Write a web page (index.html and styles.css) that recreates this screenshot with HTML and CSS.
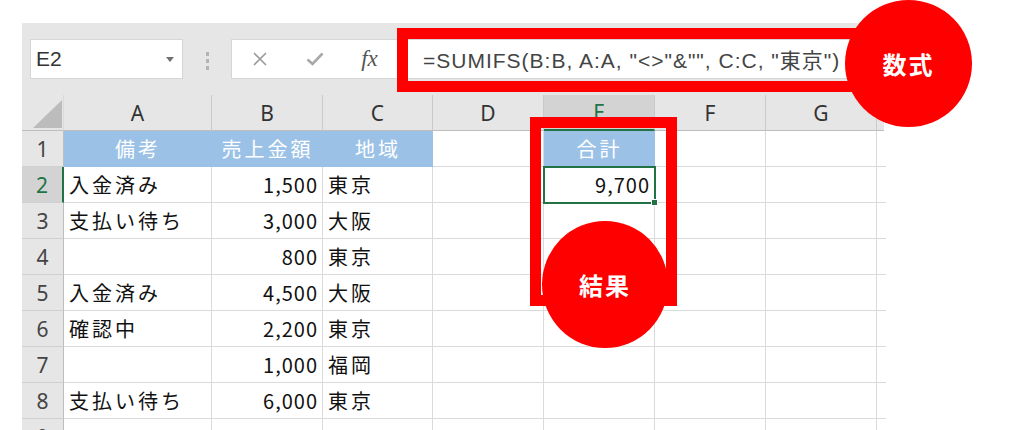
FILE: index.html
```html
<!DOCTYPE html>
<html lang="ja">
<head>
    <meta charset="UTF-8">
    <link rel="stylesheet" href="styles.css">
</head>
<body>
    <div class="sheet">
        <!-- Barre de formule -->
        <div class="toolbar">
            <div class="namebox"><span>E2</span><span class="caret"></span></div>
            <div class="grip"><i></i><i></i><i></i></div>
            <div class="fbar">
                <span class="fb-slot">
                    <svg width="16" height="16" viewBox="0 0 16 16">
                        <path d="M2,2 L14,14 M14,2 L2,14" stroke="#9a9a9a" stroke-width="1.6" fill="none"/>
                    </svg>
                </span>
                <span class="fb-slot">
                    <svg width="18" height="14" viewBox="0 0 18 14">
                        <path d="M1.5,7.5 L6.5,12 L16.5,1.5" stroke="#a8a8a8" stroke-width="2.6" fill="none"/>
                    </svg>
                </span>
                <span class="fb-slot fx">fx</span>
                <span class="formula">=SUMIFS(B:B, A:A, "&lt;&gt;"&amp;"", C:C, "東京")</span>
            </div>
        </div>

        <!-- Feuille -->
        <div class="grid">
            <div class="corner">
                <svg width="42" height="36">
                    <polygon points="11,33 40,33 40,5" fill="#bcbcbc"/>
                </svg>
            </div>
            <div class="ch">A</div>
            <div class="ch">B</div>
            <div class="ch">C</div>
            <div class="ch">D</div>
            <div class="ch active">E</div>
            <div class="ch">F</div>
            <div class="ch">G</div>
            <div class="ch edge"></div>

            <div class="rh">1</div>
            <div class="c hd">備考</div>
            <div class="c hd">売上金額</div>
            <div class="c hd">地域</div>
            <div class="c"></div>
            <div class="c hd">合計</div>
            <div class="c"></div>
            <div class="c"></div>
            <div class="c edge"></div>

            <div class="rh active">2</div>
            <div class="c">入金済み</div>
            <div class="c num">1,500</div>
            <div class="c">東京</div>
            <div class="c"></div>
            <div class="c num sel">9,700</div>
            <div class="c"></div>
            <div class="c"></div>
            <div class="c edge"></div>

            <div class="rh">3</div>
            <div class="c">支払い待ち</div>
            <div class="c num">3,000</div>
            <div class="c">大阪</div>
            <div class="c"></div>
            <div class="c"></div>
            <div class="c"></div>
            <div class="c"></div>
            <div class="c edge"></div>

            <div class="rh">4</div>
            <div class="c"></div>
            <div class="c num">800</div>
            <div class="c">東京</div>
            <div class="c"></div>
            <div class="c"></div>
            <div class="c"></div>
            <div class="c"></div>
            <div class="c edge"></div>

            <div class="rh">5</div>
            <div class="c">入金済み</div>
            <div class="c num">4,500</div>
            <div class="c">大阪</div>
            <div class="c"></div>
            <div class="c"></div>
            <div class="c"></div>
            <div class="c"></div>
            <div class="c edge"></div>

            <div class="rh">6</div>
            <div class="c">確認中</div>
            <div class="c num">2,200</div>
            <div class="c">東京</div>
            <div class="c"></div>
            <div class="c"></div>
            <div class="c"></div>
            <div class="c"></div>
            <div class="c edge"></div>

            <div class="rh">7</div>
            <div class="c"></div>
            <div class="c num">1,000</div>
            <div class="c">福岡</div>
            <div class="c"></div>
            <div class="c"></div>
            <div class="c"></div>
            <div class="c"></div>
            <div class="c edge"></div>

            <div class="rh">8</div>
            <div class="c">支払い待ち</div>
            <div class="c num">6,000</div>
            <div class="c">東京</div>
            <div class="c"></div>
            <div class="c"></div>
            <div class="c"></div>
            <div class="c"></div>
            <div class="c edge"></div>

            <div class="rh">9</div>
            <div class="c"></div>
            <div class="c"></div>
            <div class="c"></div>
            <div class="c"></div>
            <div class="c"></div>
            <div class="c"></div>
            <div class="c"></div>
            <div class="c edge"></div>
        </div>
    </div>

    <!-- Annotations -->
    <div class="mark mark-formula"></div>
    <div class="bubble bubble-formula">数式</div>
    <div class="mark mark-result"></div>
    <div class="bubble bubble-result">結果</div>
</body>
</html>
```

FILE: styles.css
```css
:root {
    --red: #ff0000;
    --green: #217346;
    --chrome: #e6e6e6;
    --chrome-on: #d3d3d3;
    --gridline: #dadada;
    --head-fill: #9bc2e6;
}

body {
    margin: 0;
    background: white;
    overflow: hidden;
    font-family: 'Noto Sans CJK JP', sans-serif;
}

.sheet {
    margin: 23px 0 0 22px;
    width: 862px;
}

.toolbar {
    height: 72px;
    box-sizing: border-box;
    padding: 16px 7px 0 8px;
    background: var(--chrome);
    display: flex;
    align-items: flex-start;
}

.namebox {
    width: 153px;
    height: 40px;
    box-sizing: border-box;
    padding: 0 8px 0 5px;
    background: white;
    border: 1px solid #d6d6d6;
    display: flex;
    align-items: center;
    justify-content: space-between;
    font-family: 'Liberation Sans', sans-serif;
    font-size: 21px;
    color: #333;
}

.caret {
    border-left: 4px solid transparent;
    border-right: 4px solid transparent;
    border-top: 5px solid #707070;
}

.grip {
    width: 3px;
    margin: 13px 22px 0 23px;
    display: flex;
    flex-direction: column;
    gap: 3px;
}

.grip i {
    width: 3px;
    height: 4px;
    background: #b4b4b4;
}

.fbar {
    flex: 1;
    height: 40px;
    box-sizing: border-box;
    background: white;
    border: 1px solid #d6d6d6;
    display: flex;
    align-items: center;
}

.fb-slot {
    width: 55px;
    display: flex;
    justify-content: center;
}

.fx {
    font-family: 'Liberation Serif', serif;
    font-style: italic;
    font-size: 23px;
    color: #555;
}

.formula {
    margin-left: 26px;
    font-family: 'Liberation Sans', 'Noto Sans CJK JP', sans-serif;
    font-size: 21px;
    letter-spacing: 1px;
    color: #444;
    white-space: nowrap;
}

.grid {
    display: grid;
    grid-template-columns: 42px 148px 111px 110px 111px 111px 111px 111px 7px;
    grid-auto-rows: 36px;
}

.grid > div {
    box-sizing: border-box;
    border-right: 1px solid var(--gridline);
    border-bottom: 1px solid var(--gridline);
    display: flex;
    align-items: center;
}

.grid > .edge {
    border-right: none;
}

.corner {
    background: var(--chrome);
}

.grid > .corner,
.grid > .ch {
    border-bottom-color: #bdbdbd;
}

.grid > .ch {
    background: var(--chrome);
    border-right-color: #cacaca;
    justify-content: center;
    font-family: 'Noto Sans', sans-serif;
    font-size: 21px;
    color: #333;
}

.grid > .ch.active {
    background: var(--chrome-on);
    color: var(--green);
    border-bottom: 2px solid var(--green);
}

.grid > .rh {
    background: var(--chrome);
    border-right-color: #bdbdbd;
    border-bottom-color: #d0d0d0;
    justify-content: center;
    font-family: 'Noto Sans', sans-serif;
    font-size: 21px;
    color: #444;
}

.grid > .rh.active {
    background: var(--chrome-on);
    color: var(--green);
    border-right: 2px solid var(--green);
}

.c {
    padding: 0 4px 0 5px;
    font-size: 20px;
    letter-spacing: 3px;
    color: #111;
    white-space: nowrap;
}

.grid > .hd {
    background: var(--head-fill);
    border-color: var(--head-fill);
    justify-content: center;
    color: white;
    letter-spacing: 3px;
}

.c.num {
    justify-content: flex-end;
    letter-spacing: 1px;
}

.c.sel {
    position: relative;
    z-index: 1;
    outline: 2px solid var(--green);
    outline-offset: -1px;
}

.c.sel::after {
    content: "";
    position: absolute;
    right: -4px;
    bottom: -4px;
    width: 5px;
    height: 5px;
    background: var(--green);
    border: 1px solid white;
}

/* Annotations rouges */
.mark {
    position: absolute;
    box-sizing: border-box;
    border: 11px solid var(--red);
    z-index: 2;
}

.mark-formula {
    left: 397px;
    top: 28px;
    width: 473px;
    height: 64px;
}

.mark-result {
    left: 530px;
    top: 117px;
    width: 147px;
    height: 189px;
}

.bubble {
    position: absolute;
    z-index: 3;
    border-radius: 50%;
    background: var(--red);
    color: white;
    font-weight: 700;
    font-size: 24px;
    letter-spacing: 2px;
    display: flex;
    align-items: center;
    justify-content: center;
}

.bubble-formula {
    left: 845px;
    top: 0;
    width: 127px;
    height: 127px;
}

.bubble-result {
    left: 542px;
    top: 221px;
    width: 126px;
    height: 127px;
}
```
